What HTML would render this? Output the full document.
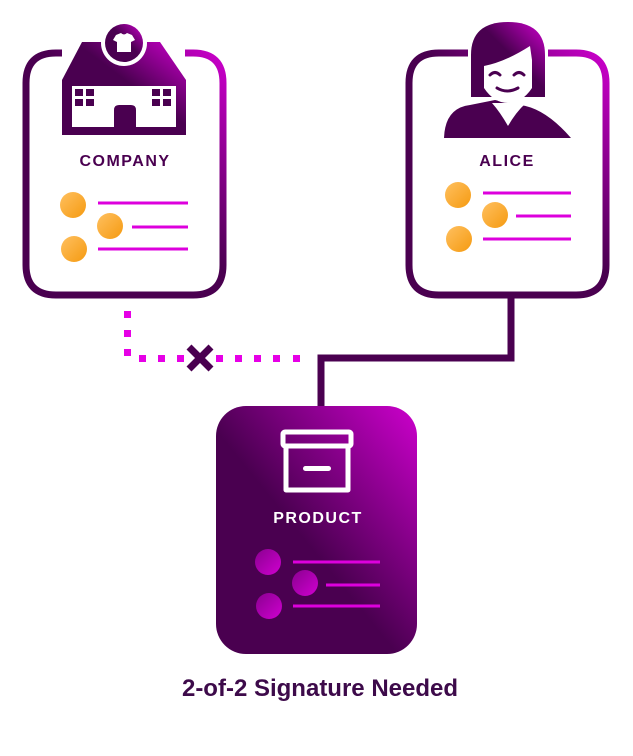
<!DOCTYPE html>
<html><head><meta charset="utf-8"><style>
html,body{margin:0;padding:0;background:#fff;width:633px;height:756px;overflow:hidden}
text{font-family:"Liberation Sans","DejaVu Sans",sans-serif;font-weight:bold}
</style></head><body>
<svg width="633" height="756" viewBox="0 0 633 756" xmlns="http://www.w3.org/2000/svg">
<defs>
<linearGradient id="cg" x1="0" y1="1" x2="1" y2="0">
<stop offset="0.55" stop-color="#4a0050"/><stop offset="1" stop-color="#cc00cc"/></linearGradient>
<linearGradient id="pg" x1="0" y1="1" x2="1" y2="0">
<stop offset="0.45" stop-color="#4a0050"/><stop offset="1" stop-color="#cc00cc"/></linearGradient>
<linearGradient id="og" x1="0" y1="0" x2="1" y2="1">
<stop offset="0" stop-color="#ffc060"/><stop offset="1" stop-color="#f59a10"/></linearGradient>
<linearGradient id="mg" x1="0" y1="0" x2="1" y2="1">
<stop offset="0" stop-color="#8a0090"/><stop offset="1" stop-color="#d000d0"/></linearGradient>
</defs>

<g fill="#e600e6">
<rect x="124" y="311" width="7" height="7"/><rect x="124" y="330" width="7" height="7"/><rect x="124" y="349" width="7" height="7"/>
<rect x="139" y="355" width="7" height="7"/><rect x="158" y="355" width="7" height="7"/><rect x="177" y="355" width="7" height="7"/>
<rect x="216" y="355" width="7" height="7"/><rect x="235" y="355" width="7" height="7"/><rect x="254" y="355" width="7" height="7"/><rect x="273" y="355" width="7" height="7"/><rect x="293" y="355" width="7" height="7"/>
</g>
<path d="M189 347 L211 369 M211 347 L189 369" stroke="#4a0050" stroke-width="7"/>
<path d="M321 408 V358 H511 V296" fill="none" stroke="#4a0050" stroke-width="7"/>

<!-- company card -->
<path d="M62 53 H56 Q26 53 26 83 V265 Q26 295 56 295 H193 Q223 295 223 265 V83 Q223 53 193 53 H185" fill="none" stroke="url(#cg)" stroke-width="7"/>
<path d="M62 80 L82 42 L160 42 L186 80 V135 H62 Z" fill="url(#cg)"/>
<rect x="72" y="86" width="104" height="41" fill="#fff"/>
<g fill="#4a0050">
<rect x="75" y="89" width="8" height="7"/><rect x="86" y="89" width="8" height="7"/><rect x="75" y="99" width="8" height="7"/><rect x="86" y="99" width="8" height="7"/>
<rect x="152" y="89" width="8" height="7"/><rect x="163" y="89" width="8" height="7"/><rect x="152" y="99" width="8" height="7"/><rect x="163" y="99" width="8" height="7"/>
<path d="M114 127 V110 Q114 105 119 105 H131 Q136 105 136 110 V127 Z"/>
</g>
<circle cx="124" cy="43" r="23" fill="#fff"/>
<circle cx="124" cy="43" r="19" fill="url(#cg)"/>
<path d="M116 35 L121 33 Q124 36 127 33 L132 35 L135 40 L131 42 V52 H117 V42 L113 40 Z" fill="#fff"/>
<text x="125" y="166" text-anchor="middle" font-size="16" fill="#4a0050" letter-spacing="1.5">COMPANY</text>
<g fill="url(#og)"><circle cx="73" cy="205" r="13"/><circle cx="110" cy="226" r="13"/><circle cx="74" cy="249" r="13"/></g>
<g stroke="#dd00dd" stroke-width="3"><path d="M98 203 H188 M132 227 H188 M98 249 H188"/></g>

<!-- alice card -->
<path d="M468 53 H439 Q409 53 409 83 V265 Q409 295 439 295 H576 Q606 295 606 265 V83 Q606 53 576 53 H548" fill="none" stroke="url(#cg)" stroke-width="7"/>
<path d="M444 138 Q445 108 470 105 L495 100 L520 105 Q545 108 571 138 Z" fill="#4a0050"/>
<path d="M471 97 V55 Q471 22 508 22 Q545 22 545 55 V97 Z" fill="url(#cg)"/>
<path d="M484 66 Q505 62 530 46 L532 60 V88 Q522 103 508 103 Q494 103 484 88 Z" fill="#fff"/>
<path d="M492 103 Q500 112 508 126 Q516 112 526 103 Z" fill="#fff"/>
<path d="M490 75 Q495 70 500 75 M514 75 Q519 70 524 75 M497 88 Q507 94 518 88" stroke="#4a0050" stroke-width="3" fill="none" stroke-linecap="round"/>
<text x="507" y="166" text-anchor="middle" font-size="16" fill="#4a0050" letter-spacing="1.5">ALICE</text>
<g fill="url(#og)"><circle cx="458" cy="195" r="13"/><circle cx="495" cy="215" r="13"/><circle cx="459" cy="239" r="13"/></g>
<g stroke="#dd00dd" stroke-width="3"><path d="M483 193 H571 M516 216 H571 M483 239 H571"/></g>

<!-- product card -->
<rect x="216" y="406" width="201" height="248" rx="30" fill="url(#pg)"/>
<g fill="none" stroke="#fff" stroke-width="5" stroke-linejoin="round">
<rect x="283" y="432" width="68" height="14" rx="2"/>
<path d="M286 446 V490 H348 V446"/>
</g>
<rect x="303" y="466" width="28" height="5" rx="2.5" fill="#fff"/>
<text x="318" y="523" text-anchor="middle" font-size="16" fill="#fff" letter-spacing="1.5">PRODUCT</text>
<g fill="url(#mg)"><circle cx="268" cy="562" r="13"/><circle cx="305" cy="583" r="13"/><circle cx="269" cy="606" r="13"/></g>
<g stroke="#dd00dd" stroke-width="3"><path d="M293 562 H380 M326 585 H380 M293 606 H380"/></g>

<text x="320" y="696" text-anchor="middle" font-size="24" fill="#3d0a4a">2-of-2 Signature Needed</text>
</svg>
</body></html>
